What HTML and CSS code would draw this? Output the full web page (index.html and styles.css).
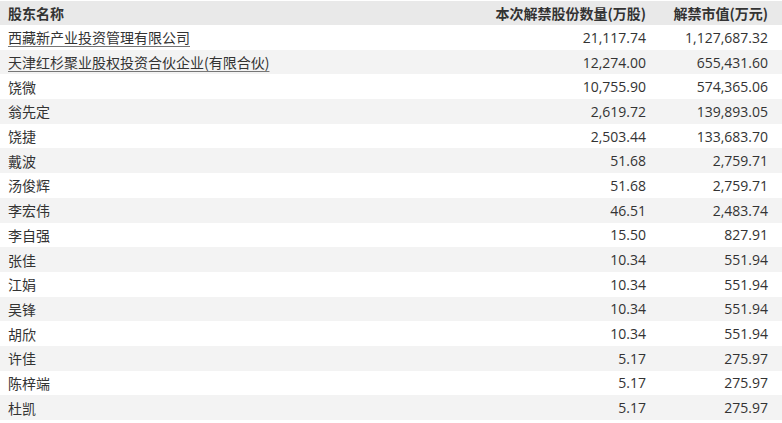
FILE: index.html
```html
<!DOCTYPE html>
<html lang="zh-CN">
<head>
<meta charset="utf-8">
<link rel="stylesheet" href="styles.css">
</head>
<body>
<div class="table">
  <div class="row head">
    <div class="c1">股东名称</div>
    <div class="c2">本次解禁股份数量(万股)</div>
    <div class="c3">解禁市值(万元)</div>
  </div>
  <div class="row"><div class="c1"><span class="link">西藏新产业投资管理有限公司</span></div><div class="c2">21,117.74</div><div class="c3">1,127,687.32</div></div>
  <div class="row"><div class="c1"><span class="link">天津红杉聚业股权投资合伙企业(有限合伙)</span></div><div class="c2">12,274.00</div><div class="c3">655,431.60</div></div>
  <div class="row"><div class="c1">饶微</div><div class="c2">10,755.90</div><div class="c3">574,365.06</div></div>
  <div class="row"><div class="c1">翁先定</div><div class="c2">2,619.72</div><div class="c3">139,893.05</div></div>
  <div class="row"><div class="c1">饶捷</div><div class="c2">2,503.44</div><div class="c3">133,683.70</div></div>
  <div class="row"><div class="c1">戴波</div><div class="c2">51.68</div><div class="c3">2,759.71</div></div>
  <div class="row"><div class="c1">汤俊辉</div><div class="c2">51.68</div><div class="c3">2,759.71</div></div>
  <div class="row"><div class="c1">李宏伟</div><div class="c2">46.51</div><div class="c3">2,483.74</div></div>
  <div class="row"><div class="c1">李自强</div><div class="c2">15.50</div><div class="c3">827.91</div></div>
  <div class="row"><div class="c1">张佳</div><div class="c2">10.34</div><div class="c3">551.94</div></div>
  <div class="row"><div class="c1">江娟</div><div class="c2">10.34</div><div class="c3">551.94</div></div>
  <div class="row"><div class="c1">吴锋</div><div class="c2">10.34</div><div class="c3">551.94</div></div>
  <div class="row"><div class="c1">胡欣</div><div class="c2">10.34</div><div class="c3">551.94</div></div>
  <div class="row"><div class="c1">许佳</div><div class="c2">5.17</div><div class="c3">275.97</div></div>
  <div class="row"><div class="c1">陈梓端</div><div class="c2">5.17</div><div class="c3">275.97</div></div>
  <div class="row"><div class="c1">杜凯</div><div class="c2">5.17</div><div class="c3">275.97</div></div>
</div>
</body>
</html>
```

FILE: styles.css
```css
html, body {
  margin: 0;
  padding: 0;
  background: #ffffff;
}
body {
  font-family: "Open Sans", "Noto Sans CJK SC", sans-serif;
  font-size: 14px;
  color: #333333;
}
.table {
  padding-top: 1px;
  display: flex;
  flex-direction: column;
}
.row {
  display: grid;
  grid-template-columns: 1fr 200px 122px;
  height: 24.7px;
  align-items: center;
  white-space: nowrap;
}
.row:nth-child(odd) {
  background: #f3f3f3;
}
.row.head {
  height: 24px;
  background: #e9e9e9;
  font-weight: bold;
  font-family: "Noto Sans CJK SC", sans-serif;
}
.c1 {
  padding-left: 8px;
  font-family: "Noto Sans CJK SC", sans-serif;
}
.c2, .c3 {
  text-align: right;
  padding-right: 14px;
}
.link {
  text-decoration: underline;
  text-decoration-color: #777777;
  text-underline-offset: 3px;
}
```
